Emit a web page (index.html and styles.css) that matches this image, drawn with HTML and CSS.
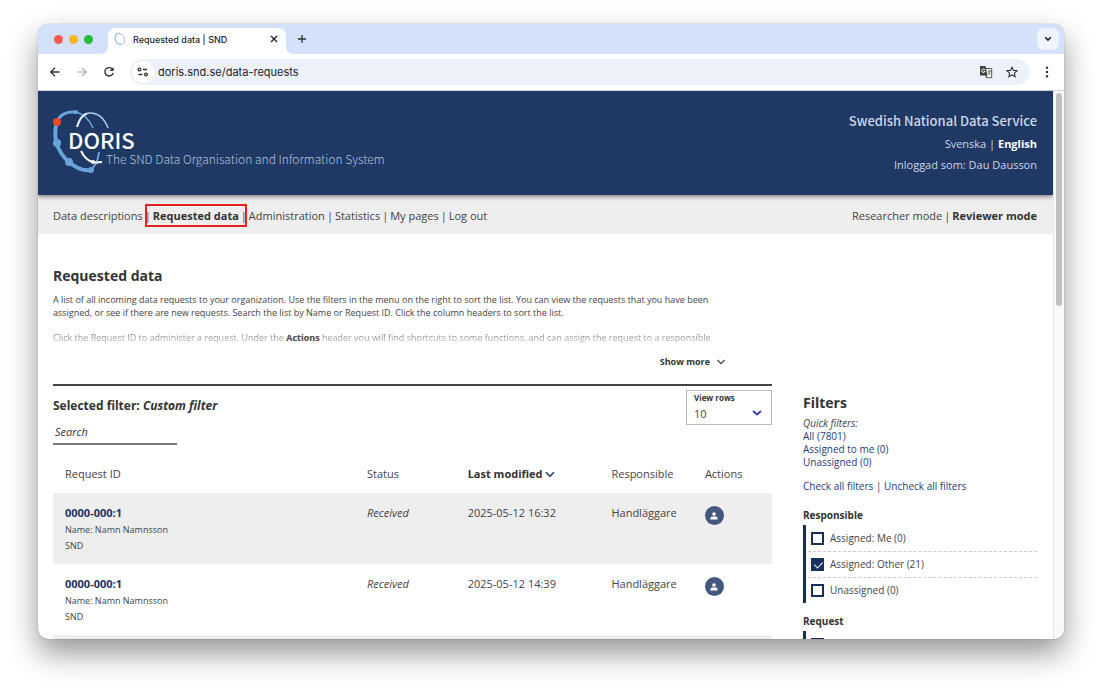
FILE: index.html
```html
<!DOCTYPE html>
<html lang="en">
<head>
    <meta charset="UTF-8">
    <meta name="viewport" content="width=device-width, initial-scale=1.0">
    <title>Requested data | SND</title>
    <link rel="stylesheet" href="styles.css">
</head>
<body>
<div class="window">
    <div class="tabbar">
        <div class="lights">
            <span class="light red"></span>
            <span class="light yellow"></span>
            <span class="light green"></span>
        </div>
        <div class="tab">
            <svg class="favicon" width="12" height="14" viewBox="0 0 12 14" fill="none">
                <path d="M6 1.5C3 0.6 1 2.5 1.2 6.5c0.2 4 3 6.500 6.200 5.800" stroke="#8db9e0" stroke-width="1.200"/>
                <path d="M5 1.500c3 0.200 6 3 5.600 7.500c-0.200 2-1.500 3.300-3.200 3.500" stroke="#b4bccb"/>
            </svg>
            <span class="tab-title">Requested data | SND</span>
            <button class="icon-btn" aria-label="Close tab">
                <svg width="8" height="8" viewBox="0 0 8 8"><path d="M1 1l6 6M7 1l-6 6" stroke="#1f1f1f" stroke-width="1.400"/></svg>
            </button>
        </div>
        <button class="icon-btn new-tab" aria-label="New tab">
            <svg width="10" height="10" viewBox="0 0 10 10"><path d="M5 1v8M1 5h8" stroke="#333" stroke-width="1.300"/></svg>
        </button>
        <button class="tab-search" aria-label="Search tabs">
            <svg width="8" height="6" viewBox="0 0 8 6" fill="none"><path d="M1.200 1.200L4 4l2.800-2.800" stroke="#222" stroke-width="1.600"/></svg>
        </button>
    </div>

    <div class="toolbar">
        <button class="icon-btn" aria-label="Back">
            <svg width="12" height="12" viewBox="0 0 12 12" fill="none"><path d="M10.500 6H2M6 1.800L1.800 6L6 10.200" stroke="#333" stroke-width="1.300"/></svg>
        </button>
        <button class="icon-btn" aria-label="Forward">
            <svg width="12" height="12" viewBox="0 0 12 12" fill="none"><path d="M1.500 6H10M6 1.800L10.200 6L6 10.200" stroke="#a5a5a5" stroke-width="1.200"/></svg>
        </button>
        <button class="icon-btn" aria-label="Reload">
            <svg width="12" height="12" viewBox="0 0 12 12" fill="none"><path d="M9.800 3.800A4.200 4.200 0 1 0 10.200 6.800" stroke="#333" stroke-width="1.400"/><path d="M10.600 1v4H6.600z" fill="#333"/></svg>
        </button>
        <div class="address">
            <button class="site-info" aria-label="Site information">
                <svg width="12" height="10" viewBox="0 0 12 10" fill="none" stroke="#333" stroke-width="1.300"><circle cx="2.500" cy="2.500" r="1.400"/><path d="M6 2.500h4M1.500 7.500h4"/><circle cx="9" cy="7.500" r="1.400"/></svg>
            </button>
            <input class="url" type="text" aria-label="Address" value="doris.snd.se/data-requests">
            <button class="icon-btn" aria-label="Translate this page">
                <svg width="14" height="14" viewBox="0 0 14 14" fill="none">
                    <path d="M5.500 3.500h7.200v9.200H7.500z" fill="#fff" stroke="#555"/>
                    <path d="M1 1h5.500l2 9.500H1z" fill="#444"/>
                    <path d="M6 5.200A1.700 1.700 0 1 0 6 6.400H4.500" stroke="#fff" stroke-width="0.900"/>
                    <path d="M8.500 6h3.500M10.200 5v1M11.400 6c-0.300 1.800-1.300 3-2.400 3.700M9 7.200c0.700 1.200 1.400 2 2.600 2.700" stroke="#555" stroke-width="0.800"/>
                    <path d="M6.500 10.500h2l-1.500 2z" fill="#444"/>
                </svg>
            </button>
            <button class="icon-btn" aria-label="Bookmark this tab">
                <svg width="12" height="12" viewBox="0 0 12 12" fill="none"><path d="M6 1.200l1.500 3.200l3.500 0.400l-2.600 2.400l0.700 3.500L6 9l-3.100 1.700l0.700-3.500L1 4.800l3.500-0.400z" stroke="#333" stroke-width="1.100"/></svg>
            </button>
        </div>
        <button class="icon-btn" aria-label="Menu">
            <svg width="4" height="12" viewBox="0 0 4 12" fill="#333"><circle cx="2" cy="1.800" r="1.200"/><circle cx="2" cy="6" r="1.200"/><circle cx="2" cy="10.200" r="1.200"/></svg>
        </button>
    </div>

    <div class="viewport">
        <div class="page">
            <header class="header">
                <div class="brand">
                    <svg class="logo" width="56" height="66" viewBox="0 0 56 66" fill="none">
                        <path d="M4 14C8 5 15 3 23 4C31 6 36 11 40 20" stroke="#6aa3dc" stroke-width="1.500"/>
                        <path d="M4 14C7 6 15 3 24 4.500" stroke="#6aa3dc" stroke-width="3"/>
                        <path d="M4 14C1.500 22 2 29 3.500 35C6 43 10 49 16 54C23 60 31 63.500 39 62" stroke="#6aa3dc" stroke-width="4"/>
                        <path d="M37 62C42 59 45 54 46 44" stroke="#6aa3dc" stroke-width="2"/>
                        <path d="M24 19C27 9 31 5 37 5C46 5 52 12 55 20" stroke="#a9cbee" stroke-width="1.500"/>
                        <path d="M24 19C26 12 29 7 34 5.500" stroke="#e4effa" stroke-width="2"/>
                        <path d="M28 43C31 49 35 53 40 54C43 55 46 54 49 54" stroke="#fff" stroke-width="2"/>
                        <circle cx="23" cy="4" r="2" fill="#6aa3dc"/>
                        <circle cx="4" cy="35" r="4" fill="#6aa3dc"/>
                        <circle cx="16" cy="54" r="4" fill="#6aa3dc"/>
                        <circle cx="38" cy="62" r="3" fill="#6aa3dc"/>
                        <circle cx="40" cy="54" r="2" fill="#fff"/>
                        <circle cx="4" cy="14" r="4" fill="#ee452f"/>
                    </svg>
                    <div class="brand-text">
                        <strong class="brand-name">DORIS</strong>
                        <span class="tagline">The SND Data Organisation and Information System</span>
                    </div>
                </div>
                <div class="account">
                    <div class="org">Swedish National Data Service</div>
                    <div><a href="#">Svenska</a> | <a href="#" class="active">English</a></div>
                    <div>Inloggad som: Dau Dausson</div>
                </div>
            </header>

            <nav class="nav">
                <div class="links">
                    <a href="#">Data descriptions</a><span>|</span>
                    <a href="#" class="active marked">Requested data</a><span>|</span>
                    <a href="#">Administration</a><span>|</span>
                    <a href="#">Statistics</a><span>|</span>
                    <a href="#">My pages</a><span>|</span>
                    <a href="#">Log out</a>
                </div>
                <div class="links">
                    <a href="#">Researcher mode</a><span>|</span>
                    <a href="#" class="active">Reviewer mode</a>
                </div>
            </nav>

            <section class="intro">
                <h1>Requested data</h1>
                <div class="intro-text">
                    <p>A list of all incoming data requests to your organization. Use the filters in the menu on the right to sort the list. You can view the requests that you have been assigned, or see if there are new requests. Search the list by Name or Request ID. Click the column headers to sort the list.</p>
                    <p class="faded">Click the Request ID to administer a request. Under the <b>Actions</b> header you will find shortcuts to some functions, and can assign the request to a responsible</p>
                </div>
                <button class="show-more">Show more
                    <svg width="8" height="6" viewBox="0 0 8 6" fill="none"><path d="M0.500 1L4 4.600L7.500 1" stroke="#444" stroke-width="1.200"/></svg>
                </button>
            </section>

            <div class="columns">
                <main class="list">
                    <div class="list-head">
                        <div>
                            <h2>Selected filter: <em>Custom filter</em></h2>
                            <input class="search" type="search" placeholder="Search" aria-label="Search">
                        </div>
                        <div class="rows-box">
                            <label for="rows">View rows</label>
                            <select id="rows">
                                <option>10</option>
                            </select>
                            <svg class="rows-arrow" width="10" height="8" viewBox="0 0 10 8" fill="none"><path d="M1 2l4 3.500L9 2" stroke="#3a3fb0" stroke-width="2"/></svg>
                        </div>
                    </div>

                    <table class="requests">
                        <colgroup>
                            <col class="col-id"><col class="col-status"><col class="col-date"><col class="col-resp"><col class="col-act">
                        </colgroup>
                        <thead>
                            <tr>
                                <th>Request ID</th>
                                <th>Status</th>
                                <th class="sorted">Last modified <svg width="10" height="7" viewBox="0 0 10 7" fill="none"><path d="M1 1.200l4 4l4-4" stroke="#1e3a66" stroke-width="1.600"/></svg></th>
                                <th>Responsible</th>
                                <th>Actions</th>
                            </tr>
                        </thead>
                        <tbody>
                            <tr>
                                <td><a href="#" class="req-id">0000-000:1</a><div class="meta">Name: Namn Namnsson</div><div class="meta">SND</div></td>
                                <td><em>Received</em></td>
                                <td>2025-05-12 16:32</td>
                                <td>Handläggare</td>
                                <td><button class="assign" aria-label="Assign"><svg width="8" height="8" viewBox="0 0 8 8" fill="#fff"><circle cx="4" cy="2" r="1.800"/><path d="M0.500 7.500V6.200Q0.500 4.500 2.200 4.500H5.800Q7.500 4.500 7.500 6.200V7.500z"/></svg></button></td>
                            </tr>
                            <tr>
                                <td><a href="#" class="req-id">0000-000:1</a><div class="meta">Name: Namn Namnsson</div><div class="meta">SND</div></td>
                                <td><em>Received</em></td>
                                <td>2025-05-12 14:39</td>
                                <td>Handläggare</td>
                                <td><button class="assign" aria-label="Assign"><svg width="8" height="8" viewBox="0 0 8 8" fill="#fff"><circle cx="4" cy="2" r="1.800"/><path d="M0.500 7.500V6.200Q0.500 4.500 2.200 4.500H5.800Q7.500 4.500 7.500 6.200V7.500z"/></svg></button></td>
                            </tr>
                            <tr>
                                <td colspan="5"></td>
                            </tr>
                        </tbody>
                    </table>
                </main>

                <aside class="filters">
                    <h1>Filters</h1>
                    <div class="quick">
                        <em>Quick filters:</em>
                        <a href="#">All (7801)</a>
                        <a href="#">Assigned to me (0)</a>
                        <a href="#">Unassigned (0)</a>
                    </div>
                    <div class="check-all"><a href="#">Check all filters</a> | <a href="#">Uncheck all filters</a></div>
                    <h3>Responsible</h3>
                    <div class="group">
                        <label><input type="checkbox"> Assigned: Me (0)</label>
                        <label><input type="checkbox" checked> Assigned: Other (21)</label>
                        <label><input type="checkbox"> Unassigned (0)</label>
                    </div>
                    <h3>Request</h3>
                    <div class="group">
                        <label><input type="checkbox" aria-label="Request"></label>
                    </div>
                </aside>
            </div>
        </div>
        <div class="scrollbar"><div class="thumb"></div></div>
    </div>
</div>
</body>
</html>
```

FILE: styles.css
```css
*{
    padding: 0;
    margin: 0;
    box-sizing: border-box;
}
body{
    height: 100vh;
    padding: 24px 36px 52px 38px;
    overflow: hidden;
    background-color: #fff;
    color: #444;
    font-family: "Open Sans", "Noto Sans", sans-serif;
    font-size: 11px;
}
a{
    color: inherit;
    text-decoration: none;
}
button, input, select{
    font-family: inherit;
    border: none;
    background: none;
    outline: none;
}
button{
    cursor: pointer;
}
svg{
    display: block;
}
.window{
    height: 100%;
    display: flex;
    flex-direction: column;
    overflow: hidden;
    border-radius: 10px;
    background-color: #fff;
    box-shadow: 0 0 1px rgba(0,0,0,0.6), 0 14px 30px rgba(0,0,0,0.42);
}

/* browser tabs */
.tabbar{
    flex: none;
    height: 30px;
    display: flex;
    align-items: center;
    padding: 0 5px 0 16px;
    background-color: #d3e1fb;
    font-family: Inter, sans-serif;
}
.lights{
    display: flex;
    gap: 6px;
    margin-right: 15px;
}
.light{
    width: 9px;
    height: 9px;
    border-radius: 50%;
}
.red{
    background-color: #fe5a52;
}
.yellow{
    background-color: #f8b427;
}
.green{
    background-color: #27bd35;
}
.tab{
    position: relative;
    align-self: flex-end;
    width: 178px;
    height: 26px;
    display: flex;
    align-items: center;
    padding: 0 8px 4px 6px;
    border-radius: 8px 8px 0 0;
    background-color: #fff;
    color: #1f1f1f;
    font-size: 9px;
    font-weight: 500;
}
.tab::before, .tab::after{
    content: "";
    position: absolute;
    bottom: 0;
    width: 8px;
    height: 8px;
}
.tab::before{
    right: 100%;
    background: radial-gradient(circle at 0 0, #d3e1fb 8px, #fff 8px);
}
.tab::after{
    left: 100%;
    background: radial-gradient(circle at 100% 0, #d3e1fb 8px, #fff 8px);
}
.favicon{
    margin-right: 7px;
}
.tab-title{
    flex: 1;
}
.icon-btn{
    display: flex;
    align-items: center;
    justify-content: center;
}
.new-tab{
    margin-left: 11px;
}
.tab-search{
    width: 22px;
    height: 22px;
    display: flex;
    align-items: center;
    justify-content: center;
    margin-left: auto;
    border-radius: 7px;
    background-color: #eff4fe;
}

/* address bar */
.toolbar{
    flex: none;
    height: 37px;
    display: flex;
    align-items: center;
    gap: 15px;
    padding: 0 15px 0 11px;
    border-bottom: 1px solid #cdd3dc;
}
.address{
    flex: 1;
    height: 26px;
    display: flex;
    align-items: center;
    gap: 13px;
    padding: 0 12px 0 2px;
    border-radius: 13px;
    background-color: #edf1fa;
}
.site-info{
    width: 22px;
    height: 22px;
    display: flex;
    align-items: center;
    justify-content: center;
    margin-right: -9px;
    border-radius: 50%;
    background-color: #fff;
}
.url{
    flex: 1;
    color: #1f1f1f;
    font-family: Inter, sans-serif;
    font-size: 11px;
}

/* page */
.viewport{
    flex: 1;
    min-height: 0;
    display: flex;
}
.page{
    flex: 1;
    overflow: hidden;
}
.scrollbar{
    width: 11px;
    padding: 2px 2px 0 2px;
    border-left: 1px solid #e8e8e8;
    background-color: #fafafa;
}
.thumb{
    height: 39%;
    border-radius: 4px;
    background-color: #c1c1c1;
}
.header{
    position: relative;
    height: 104px;
    display: flex;
    justify-content: space-between;
    padding: 17px 16px 0 15px;
    background-color: #1f3864;
    color: #ced6e4;
    box-shadow: 0 1px 5px rgba(0,0,0,0.6);
}
.brand{
    display: flex;
}
.brand-text{
    display: flex;
    flex-direction: column;
    margin-left: -41px;
    padding-top: 18px;
    font-family: "Noto Sans CJK SC", sans-serif;
}
.brand-name{
    color: #fff;
    font-size: 22px;
    font-weight: 500;
    line-height: 26px;
}
.tagline{
    padding-left: 38px;
    color: #b5c3dc;
    font-size: 12px;
    font-weight: 300;
    line-height: 14px;
}
.account{
    padding-top: 1px;
    text-align: right;
    line-height: 21px;
}
.org{
    font-family: "Noto Sans CJK SC", sans-serif;
    font-size: 13px;
    font-weight: 500;
    line-height: 24px;
}
.account .active{
    color: #fff;
}
.active{
    font-weight: bold;
}
.nav{
    height: 39px;
    display: flex;
    justify-content: space-between;
    align-items: center;
    padding: 1px 16px 0 15px;
    background-color: #eee;
}
.links{
    display: flex;
    gap: 2px;
}
.nav .active{
    color: #333;
}
.marked{
    position: relative;
}
.marked::after{
    content: "";
    position: absolute;
    inset: -4px -8px;
    border: 2px solid #e2231f;
}
h1{
    color: #333;
    font-size: 14px;
    line-height: 20px;
}
.intro{
    padding: 32px 15px 0;
}
.intro-text{
    width: 69%;
    margin-top: 7px;
    font-size: 9px;
    line-height: 13px;
}
.faded{
    margin-top: 12px;
    background: linear-gradient(#666, #ccc);
    background-clip: text;
    color: transparent;
}
.faded b{
    color: #555;
}
.show-more{
    width: 672px;
    display: flex;
    align-items: center;
    justify-content: flex-end;
    gap: 7px;
    margin: 10px 0 14px;
    color: #333;
    font-size: 9px;
    font-weight: bold;
    line-height: 16px;
}
.columns{
    display: flex;
    gap: 31px;
    padding: 0 16px 0 15px;
}
.list{
    flex: 1;
    border-top: 2px solid #444;
}
.list-head{
    display: flex;
    justify-content: space-between;
    align-items: flex-start;
    padding-top: 4px;
}
h2{
    padding-top: 7px;
    color: #333;
    font-size: 12px;
    line-height: 18px;
}
.search{
    display: block;
    width: 124px;
    height: 22px;
    margin-top: 8px;
    padding: 0 2px 4px;
    border-bottom: 2px solid #777;
    font-size: 11px;
}
.search::placeholder{
    color: #333;
    font-style: italic;
}
.rows-box{
    position: relative;
    width: 86px;
    height: 35px;
    padding: 1px 7px;
    border: 1px solid #bbb;
}
.rows-box label{
    display: block;
    color: #333;
    font-size: 8px;
    font-weight: bold;
    line-height: 12px;
}
.rows-box select{
    width: 100%;
    height: 18px;
    color: #444;
    font-size: 11px;
    appearance: none;
}
.rows-arrow{
    position: absolute;
    right: 9px;
    bottom: 7px;
    pointer-events: none;
}
.requests{
    width: 100%;
    margin-top: 10px;
    table-layout: fixed;
    border-collapse: collapse;
    font-size: 11px;
}
.col-id{
    width: 42%;
}
.col-status{
    width: 14%;
}
.col-date{
    width: 20%;
}
.col-resp{
    width: 13%;
}
.requests th{
    height: 38px;
    padding: 0 0 2px 12px;
    text-align: left;
    font-weight: normal;
}
.requests .sorted{
    color: #333;
    font-weight: bold;
}
.sorted svg{
    display: inline-block;
}
.requests td{
    height: 71px;
    padding: 12px 0 0 12px;
    vertical-align: top;
    line-height: 16px;
}
.requests tbody tr:nth-child(odd){
    background-color: #eee;
}
.req-id{
    display: block;
    padding-bottom: 1px;
    color: #1e3560;
    font-weight: bold;
}
.meta{
    font-size: 9px;
}
.assign{
    width: 19px;
    height: 19px;
    display: flex;
    align-items: center;
    justify-content: center;
    margin-top: 1px;
    border-radius: 50%;
    background-color: #44587f;
}

/* filters */
.filters{
    width: 234px;
    padding-top: 9px;
    font-size: 10px;
    line-height: 13px;
}
.filters a{
    color: #1f3a78;
}
.quick{
    display: flex;
    flex-direction: column;
    align-items: flex-start;
    margin-top: 4px;
}
.check-all{
    margin: 11px 0 16px;
}
h3{
    color: #333;
    font-size: 10px;
    line-height: 13px;
}
.group{
    margin: 3px 0 12px;
    border-left: 3px solid #16305c;
}
.group label{
    height: 26px;
    display: flex;
    align-items: center;
    gap: 6px;
    margin-left: 2px;
    padding-left: 3px;
}
.group label + label{
    border-top: 1px dashed #ccc;
}
.group input{
    width: 13px;
    height: 13px;
    border: 2px solid #16305c;
    appearance: none;
}
.group input:checked{
    background-color: #16305c;
}
.group input:checked::after{
    content: "";
    display: block;
    width: 4px;
    height: 7px;
    margin-left: 3px;
    border: solid #fff;
    border-width: 0 1px 1px 0;
    transform: rotate(45deg);
}
```
